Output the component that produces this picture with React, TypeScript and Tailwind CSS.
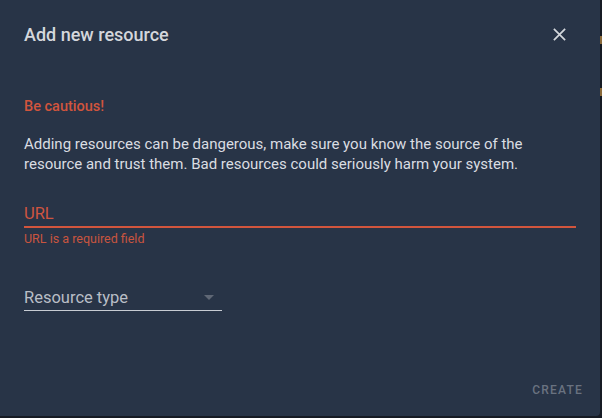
import React from 'react';

export default function App() {
  return (
    <div className="w-[602px] h-[418px] bg-[#161b24] relative font-['Roboto',sans-serif]">
      <div className="w-[600px] h-[416px] bg-[#283447] rounded-br-[4px] flex flex-col">
        <div className="flex items-center justify-between pl-6 pr-[33px] pt-[23px] h-[46px]">
          <h2 className="text-[18px] font-medium text-[#d4d7dc] leading-none">Add new resource</h2>
          <button className="text-[#d4d7dc]">
            <svg width="15" height="15" viewBox="0 0 16 16" fill="none" stroke="currentColor" strokeWidth="1.8">
              <path d="M2 2L14 14M14 2L2 14" />
            </svg>
          </button>
        </div>

        <div className="px-6 pt-[54px] flex flex-col">
          <p className="text-[14.5px] font-medium text-[#d2553d] leading-none">Be cautious!</p>
          <p className="mt-[19px] text-[15px] leading-[20px] text-[#dadde2]">
            Adding resources can be dangerous, make sure you know the source of the resource and trust them. Bad resources could seriously harm your system.
          </p>

          <div className="mt-[32px] w-[552px]">
            <div className="text-[16.5px] text-[#cf5540] leading-none pb-[4px]">URL</div>
            <div className="h-[2px] bg-[#d2553d]" />
            <div className="mt-[5px] text-[12.5px] text-[#c9543f] leading-none">URL is a required field</div>
          </div>

          <div className="mt-[44px] w-[198px]">
            <div className="flex items-center justify-between pb-[4px]">
              <span className="text-[16.5px] text-[#b9bec6] leading-none">Resource type</span>
              <svg width="12" height="6" viewBox="0 0 12 6" className="mr-[7px]">
                <path d="M1 0H11L6 5Z" fill="#5f6775" />
              </svg>
            </div>
            <div className="h-px bg-[#c8ccd3]" />
          </div>
        </div>

        <div className="mt-auto flex justify-end pr-[17px] pb-[20px]">
          <button className="text-[12px] font-medium tracking-[0.1em] text-[#6a7280] leading-none">CREATE</button>
        </div>
      </div>
      <div className="absolute right-0 top-[36px] w-[2px] h-[8px] bg-[#8a6a3a]" />
      <div className="absolute right-0 top-[88px] w-[2px] h-[8px] bg-[#8a6a3a]" />
    </div>
  );
}
